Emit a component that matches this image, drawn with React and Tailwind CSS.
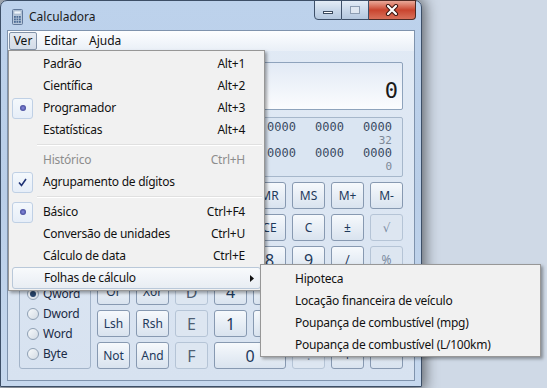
import React from 'react';

const ui = "font-['Noto_Sans','DejaVu_Sans',sans-serif]";
const mono = "font-['DejaVu_Sans_Mono','Liberation_Mono',monospace]";

const menuItems = [
  { label: 'Padrão', keys: 'Alt+1' },
  { label: 'Científica', keys: 'Alt+2' },
  { label: 'Programador', keys: 'Alt+3', mark: 'dot' },
  { label: 'Estatísticas', keys: 'Alt+4' },
  { sep: true },
  { label: 'Histórico', keys: 'Ctrl+H', disabled: true },
  { label: 'Agrupamento de dígitos', mark: 'check' },
  { sep: true },
  { label: 'Básico', keys: 'Ctrl+F4', mark: 'dot' },
  { label: 'Conversão de unidades', keys: 'Ctrl+U' },
  { label: 'Cálculo de data', keys: 'Ctrl+E' },
  { label: 'Folhas de cálculo', sub: true, active: true },
];

const subItems = [
  'Hipoteca',
  'Locação financeira de veículo',
  'Poupança de combustível (mpg)',
  'Poupança de combustível (L/100km)',
];

// programmer keypad, 8 columns x 6 rows (column 1 of the grid holds the radio groups)
const keys = [
  ['', 'Mod', 'A', 'MC', 'MR', 'MS', 'M+', 'M-'],
  ['(', ')', 'B', '←', 'CE', 'C', '±', '√'],
  ['RoL', 'RoR', 'C', '7', '8', '9', '/', '%'],
  ['Or', 'Xor', 'D', '4', '5', '6', '*', '1/x'],
  ['Lsh', 'Rsh', 'E', '1', '2', '3', '-', '='],
  ['Not', 'And', 'F', '0', '.', '+'],
];

const hexKeys = ['A', 'B', 'C3', 'D', 'E', 'F'];
const disabledKeys = ['.', '√', '%', '1/x', ''];
const bigKeys = ['A', 'B', 'C3', 'D', 'E', 'F', '0', '1', '2', '3', '4', '5', '6', '7', '8', '9'];

const colClass = ['col-start-2', 'col-start-3', 'col-start-4', 'col-start-5', 'col-start-6', 'col-start-7', 'col-start-8', 'col-start-9'];
const rowClass = ['row-start-1', 'row-start-2', 'row-start-3', 'row-start-4', 'row-start-5', 'row-start-6'];

function CalcIcon() {
  return (
    <svg width="11" height="16" viewBox="0 0 11 16">
      <rect x="0.5" y="0.5" width="10" height="15" rx="1" fill="#b7c7da" stroke="#61789a" />
      <rect x="2" y="2" width="7" height="3" fill="#eef5fb" stroke="#8ea3bd" strokeWidth="0.5" />
      {[0, 1, 2].map((r) =>
        [0, 1, 2].map((c) => (
          <rect key={r + '-' + c} x={2 + c * 2.5} y={7 + r * 2.5} width="1.8" height="1.8" fill="#4d6c95" />
        ))
      )}
    </svg>
  );
}

function Radio({ label, checked }) {
  return (
    <div className="flex items-center h-[20px] pl-[7px]">
      <span className="w-[12px] h-[12px] rounded-full border border-[#8fa0b4] bg-linear-to-br from-[#f7f9fb] to-[#d3dbe4] flex items-center justify-center">
        {checked && <span className="w-[6px] h-[6px] rounded-full bg-[#27446b]" />}
      </span>
      <span className="ml-[4px] text-[12px] tracking-[-0.2px] text-[#1b2b45]">{label}</span>
    </div>
  );
}

function Key({ t, id, col, row }) {
  const hex = hexKeys.includes(id);
  const disabled = disabledKeys.includes(id);
  const big = bigKeys.includes(id);
  let span = '';
  if (t === '0') span = 'col-span-2';
  if (t === '=') span = 'row-span-2';
  let look = 'border-[#8799b1] bg-linear-to-b from-[#f6f9fc] to-[#d9e3ef] text-[#1e395b]';
  if (hex) look = 'border-[#b5c4d6] bg-[#dde6f1] text-[#4f5f74]';
  if (disabled) look = 'border-[#b5c4d6] bg-[#dde6f1] text-[#7a8ba1]';
  return (
    <div
      className={`${colClass[col]} ${rowClass[row]} ${span} flex items-center justify-center rounded-[3px] border ${look} ${
        big ? 'text-[16px]' : 'text-[12px]'
      }`}
    >
      {t}
    </div>
  );
}

function Binary() {
  const group = (labels) => (
    <>
      <div className="grid grid-cols-[repeat(8,29px)] gap-x-[19px] leading-[13px] text-[12px] text-[#3a4b63]">
        {Array.from({ length: 8 }).map((_, i) => (
          <span key={i}>0000</span>
        ))}
      </div>
      <div className="grid grid-cols-[repeat(8,29px)] gap-x-[19px] leading-[13px] text-[11px] text-[#7d8896]">
        <span>{labels[0]}</span>
        <span />
        <span />
        <span />
        <span>{labels[1]}</span>
        <span />
        <span />
        <span className="text-right">{labels[2]}</span>
      </div>
    </>
  );
  return (
    <div className={`${mono} mt-[7px] h-[60px] rounded-[2px] border border-[#a6b7cb] bg-[#dae5f2] pl-[7px] pt-[3px]`}>
      {group(['63', '47', '32'])}
      {group(['31', '15', '0'])}
    </div>
  );
}

function Window() {
  return (
    <div className="absolute left-0 top-0 w-[422px] h-[387px] flex flex-col rounded-t-[7px] border border-[#3d4f67] bg-linear-to-b from-[#bdd2ec] via-[#b9cee8] to-[#c6d8ee] shadow-[0_0_14px_3px_rgba(0,0,0,0.55)]">
      {/* title bar */}
      <div className="h-[29px] flex items-start justify-between">
        <div className="flex items-center pl-[11px] pt-[7px]">
          <CalcIcon />
          <span className="ml-[6px] text-[12px] text-[#1a1a1a]">Calculadora</span>
        </div>
        <div className="flex mr-[5px] -mt-px">
          <div className="w-[28px] h-[20px] border border-[#3e5069] rounded-bl-[4px] bg-linear-to-b from-[#e3ecf6] via-[#c9d8ea] to-[#b4c7de] flex items-end justify-center pb-[5px]">
            <span className="w-[10px] h-[3px] bg-white border border-[#3b4a5e]" />
          </div>
          <div className="w-[27px] h-[20px] border-y border-r border-[#3e5069] bg-linear-to-b from-[#e3ecf6] via-[#c9d8ea] to-[#b4c7de] flex items-center justify-center">
            <span className="w-[10px] h-[8px] border border-[#8d9db2] bg-[#dfe7f1]" />
          </div>
          <div className="w-[47px] h-[20px] border-y border-r border-[#4e2a24] rounded-br-[4px] bg-linear-to-b from-[#e9a899] via-[#c9442e] to-[#d8705a] flex items-center justify-center">
            <svg width="14" height="12" viewBox="0 0 14 12">
              <path d="M3 2 L11 10 M11 2 L3 10" stroke="#3b1510" strokeWidth="4.2" strokeLinecap="round" />
              <path d="M3 2 L11 10 M11 2 L3 10" stroke="#ffffff" strokeWidth="2.2" strokeLinecap="round" />
            </svg>
          </div>
        </div>
      </div>

      {/* client area */}
      <div className="mx-[6px] mb-[5px] flex-1 flex flex-col border border-[#7f93ad] bg-linear-to-b from-[#e1eaf5] to-[#d7e2f0]">
        {/* menu bar */}
        <div className="h-[20px] flex items-center text-[12px] text-[#111] bg-linear-to-b from-[#fdfeff] to-[#e9eff7]">
          <div className="ml-[1px] w-[28px] h-[18px] flex items-center justify-center rounded-[2px] border border-[#8393a8] bg-linear-to-b from-[#e6ebf2] to-[#d3dce8]">
            Ver
          </div>
          <div className="w-[45px] pl-[7px]">Editar</div>
          <div className="pl-[7px]">Ajuda</div>
        </div>

        <div className="flex-1 pt-[11px] pl-[11px] pr-[11px]">
          {/* display */}
          <div className="h-[48px] rounded-[2px] border border-[#8ea3bc] bg-linear-to-b from-[#e2eaf5] to-[#fbfcfe] flex items-end justify-end pr-[4px] pb-[7px]">
            <span className={`${mono} text-[22px] leading-[22px] text-[#1a1a1a]`}>0</span>
          </div>

          <Binary />

          {/* keypad */}
          <div className="mt-[5px] grid grid-cols-[72px_repeat(8,33px)] grid-rows-[repeat(6,27px)] gap-x-[6px] gap-y-[5px]">
            <div className="col-start-1 row-start-1 row-span-3 rounded-[3px] border border-[#a3b4c9] pt-[5px]">
              <Radio label="Hex" />
              <Radio label="Dec" checked />
              <Radio label="Oct" />
              <Radio label="Bin" />
            </div>
            <div className="col-start-1 row-start-4 row-span-3 rounded-[3px] border border-[#a3b4c9] pt-[5px]">
              <Radio label="Qword" checked />
              <Radio label="Dword" />
              <Radio label="Word" />
              <Radio label="Byte" />
            </div>
            {keys.map((row, r) =>
              row.map((t, c) => {
                let col = c;
                if (r === 5 && c > 3) col = c + 1;
                const id = t === 'C' && c === 2 ? 'C3' : t;
                return <Key key={r + '-' + c} t={t} id={id} col={col} row={r} />;
              })
            )}
          </div>
        </div>
      </div>
    </div>
  );
}

function Mark({ type }) {
  if (!type) return <span className="w-[21px] h-[21px] ml-[3px]" />;
  return (
    <span className="w-[21px] h-[21px] ml-[3px] flex items-center justify-center rounded-[3px] border border-[#bfd0e5] bg-linear-to-b from-[#f4f8fc] to-[#e6eef8]">
      {type === 'dot' ? (
        <span className="w-[6px] h-[6px] rounded-full bg-radial from-[#8a8ee0] to-[#2d3180]" />
      ) : (
        <svg width="9" height="9" viewBox="0 0 9 9">
          <path d="M1 4.5 L3.5 7.5 L8 1" fill="none" stroke="#1f3275" strokeWidth="1.6" />
        </svg>
      )}
    </span>
  );
}

function ViewMenu() {
  return (
    <div className="absolute left-[8px] top-[50px] w-[257px] h-[241px] border border-[#979797] bg-[#f1f1f1] pt-[2px] shadow-[2px_2px_3px_rgba(0,0,0,0.35)] text-[12px] tracking-[-0.25px]">
      {menuItems.map((it, i) =>
        it.sep ? (
          <div key={i} className="h-[8px] flex items-center ml-[28px] mr-[2px]">
            <div className="w-full border-t border-[#e0e0e0] border-b border-b-white" />
          </div>
        ) : (
          <div
            key={i}
            className={`h-[22px] flex items-center ${
              it.active ? 'mx-[3px] rounded-[3px] border border-[#b9c8d9] bg-linear-to-b from-[#f8fafc] to-[#e8edf3]' : ''
            }`}
          >
            {it.active ? <span className="w-[21px] h-[20px]" /> : <Mark type={it.mark} />}
            <span className={`ml-[10px] flex-1 ${it.disabled ? 'text-[#8d8d8d]' : 'text-[#111]'}`}>{it.label}</span>
            {it.keys && <span className={`mr-[19px] ${it.disabled ? 'text-[#8d8d8d]' : 'text-[#111]'}`}>{it.keys}</span>}
            {it.sub && (
              <svg className="mr-[6px]" width="4" height="7" viewBox="0 0 4 7">
                <path d="M0 0 L4 3.5 L0 7 Z" fill="#111" />
              </svg>
            )}
          </div>
        )
      )}
    </div>
  );
}

function SubMenu() {
  return (
    <div className="absolute left-[260px] top-[264px] w-[281px] h-[93px] border border-[#979797] bg-[#f1f1f1] pt-[3px] shadow-[2px_2px_3px_rgba(0,0,0,0.35)] text-[12px] tracking-[-0.25px] text-[#111]">
      {subItems.map((s) => (
        <div key={s} className="h-[22px] flex items-center pl-[34px]">
          {s}
        </div>
      ))}
    </div>
  );
}

export default function App() {
  return (
    <div className={`${ui} relative w-[547px] h-[388px] overflow-hidden bg-[#cfd9e6]`}>
      <Window />
      <ViewMenu />
      <SubMenu />
    </div>
  );
}
